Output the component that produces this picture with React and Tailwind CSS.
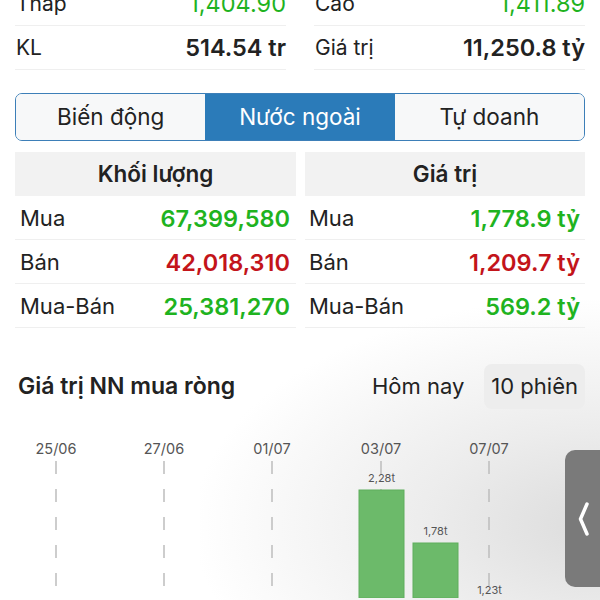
const FONT = { fontFamily: 'Inter, "Noto Sans", sans-serif' }

const top = [
  [
    { label: 'Thấp', value: '1,404.90', color: 'text-[#1fb31f]', weight: 'font-normal' },
    { label: 'KL', value: '514.54 tr', color: 'text-[#222]', weight: 'font-semibold' },
  ],
  [
    { label: 'Cao', value: '1,411.89', color: 'text-[#1fb31f]', weight: 'font-normal' },
    { label: 'Giá trị', value: '11,250.8 tỷ', color: 'text-[#222]', weight: 'font-semibold' },
  ],
]

const tables = [
  {
    title: 'Khối lượng',
    rows: [
      { label: 'Mua', value: '67,399,580', color: 'text-[#1fb31f]' },
      { label: 'Bán', value: '42,018,310', color: 'text-[#c3141a]' },
      { label: 'Mua-Bán', value: '25,381,270', color: 'text-[#1fb31f]' },
    ],
  },
  {
    title: 'Giá trị',
    rows: [
      { label: 'Mua', value: '1,778.9 tỷ', color: 'text-[#1fb31f]' },
      { label: 'Bán', value: '1,209.7 tỷ', color: 'text-[#c3141a]' },
      { label: 'Mua-Bán', value: '569.2 tỷ', color: 'text-[#1fb31f]' },
    ],
  },
]

const dates = [
  { x: 56, label: '25/06' },
  { x: 164, label: '27/06' },
  { x: 272, label: '01/07' },
  { x: 381, label: '03/07' },
  { x: 489, label: '07/07' },
]

const bars = [
  { x: 359, top: 492, label: '2,28t' },
  { x: 413, top: 545, label: '1,78t' },
  { x: 467, top: 604, label: '1,23t' },
]

function Chart() {
  const oy = 430
  return (
    <svg width="600" height="170" viewBox="0 0 600 170" className="block">
      {dates.map(d => (
        <g key={d.label}>
          <line x1={d.x} x2={d.x} y1={463 - oy} y2={170} stroke="#bdbdbd" strokeWidth="1.5" strokeDasharray="13 15" />
          <text x={d.x} y={456 - oy} textAnchor="middle" fontSize="14.5" fill="#555" style={FONT}>{d.label}</text>
        </g>
      ))}
      {bars.map(b => (
        <g key={b.label}>
          <rect x={b.x} y={b.top - oy} width="45" height={170 - (b.top - oy)} fill="#6cba6a" stroke="#5eae5c" strokeWidth="1" />
          <text x={b.x + 22.5} y={b.top - oy - 8} textAnchor="middle" fontSize="11" fill="#555" style={FONT}>{b.label}</text>
        </g>
      ))}
    </svg>
  )
}

export default function App() {
  return (
    <div className="relative w-[600px] h-[600px] overflow-hidden bg-white text-[#222]" style={FONT}>
      <div className="absolute left-[200px] right-0 top-[300px] bottom-0 bg-[radial-gradient(ellipse_at_100%_75%,#dcdcdc_0%,#ececec_30%,rgba(255,255,255,0)_72%)]" />

      <div className="relative mt-[-18px] grid grid-cols-2 gap-x-[28px] px-[15px]">
        {top.map((col, i) => (
          <div key={i}>
            {col.map(r => (
              <div key={r.label} className="flex h-[44px] items-center justify-between border-b border-[#efefef]">
                <span className="pl-[1px] text-[21px]">{r.label}</span>
                <span className={`${r.color} ${r.weight} text-[23.5px]`}>{r.value}</span>
              </div>
            ))}
          </div>
        ))}
      </div>

      <div className="relative mx-[15px] mt-[23px] flex h-[48px] overflow-hidden rounded-[7px] border-[1.5px] border-[#3d7fb8] text-[22.5px]">
        <div className="flex flex-1 items-center justify-center bg-[#f7f8f9]">Biến động</div>
        <div className="flex flex-1 items-center justify-center bg-[#2b7bb9] text-white">Nước ngoài</div>
        <div className="flex flex-1 items-center justify-center bg-[#f7f8f9]">Tự doanh</div>
      </div>

      <div className="relative mt-[11px] grid grid-cols-[281px_280px] gap-x-[9px] px-[15px]">
        {tables.map((t, i) => (
          <div key={t.title}>
            <div className="flex h-[44px] items-center justify-center bg-[#f2f2f2] text-[22.5px] font-semibold">{t.title}</div>
            {t.rows.map(r => (
              <div key={r.label} className={`flex h-[44px] items-center justify-between border-b border-[#efefef] pt-[2px] ${i === 0 ? 'pl-[5px] pr-[6px]' : 'pl-[4px] pr-[5px]'}`}>
                <span className="text-[22px]">{r.label}</span>
                <span className={`${r.color} text-[23.5px] font-semibold`}>{r.value}</span>
              </div>
            ))}
          </div>
        ))}
      </div>

      <div className="relative mt-[36px] flex h-[45px] items-center justify-between pl-[18px] pr-[15px]">
        <span className="text-[23px] font-semibold">Giá trị NN mua ròng</span>
        <div className="flex items-center gap-[20px] text-[22px]">
          <span>Hôm nay</span>
          <span className="flex h-[45px] items-center rounded-[8px] bg-[#ededed] px-[7px]">10 phiên</span>
        </div>
      </div>

      <div className="relative mt-[19px]">
        <Chart />
      </div>

      <div className="absolute right-0 top-[450px] flex h-[137px] w-[35px] items-center justify-center rounded-l-[10px] bg-[#7a7a7a]">
        <svg width="14" height="38" viewBox="0 0 14 38" className="ml-[2px]">
          <path d="M10 4 L3.5 19 L10 34" fill="none" stroke="white" strokeWidth="3.5" strokeLinecap="round" strokeLinejoin="round" />
        </svg>
      </div>
    </div>
  )
}
